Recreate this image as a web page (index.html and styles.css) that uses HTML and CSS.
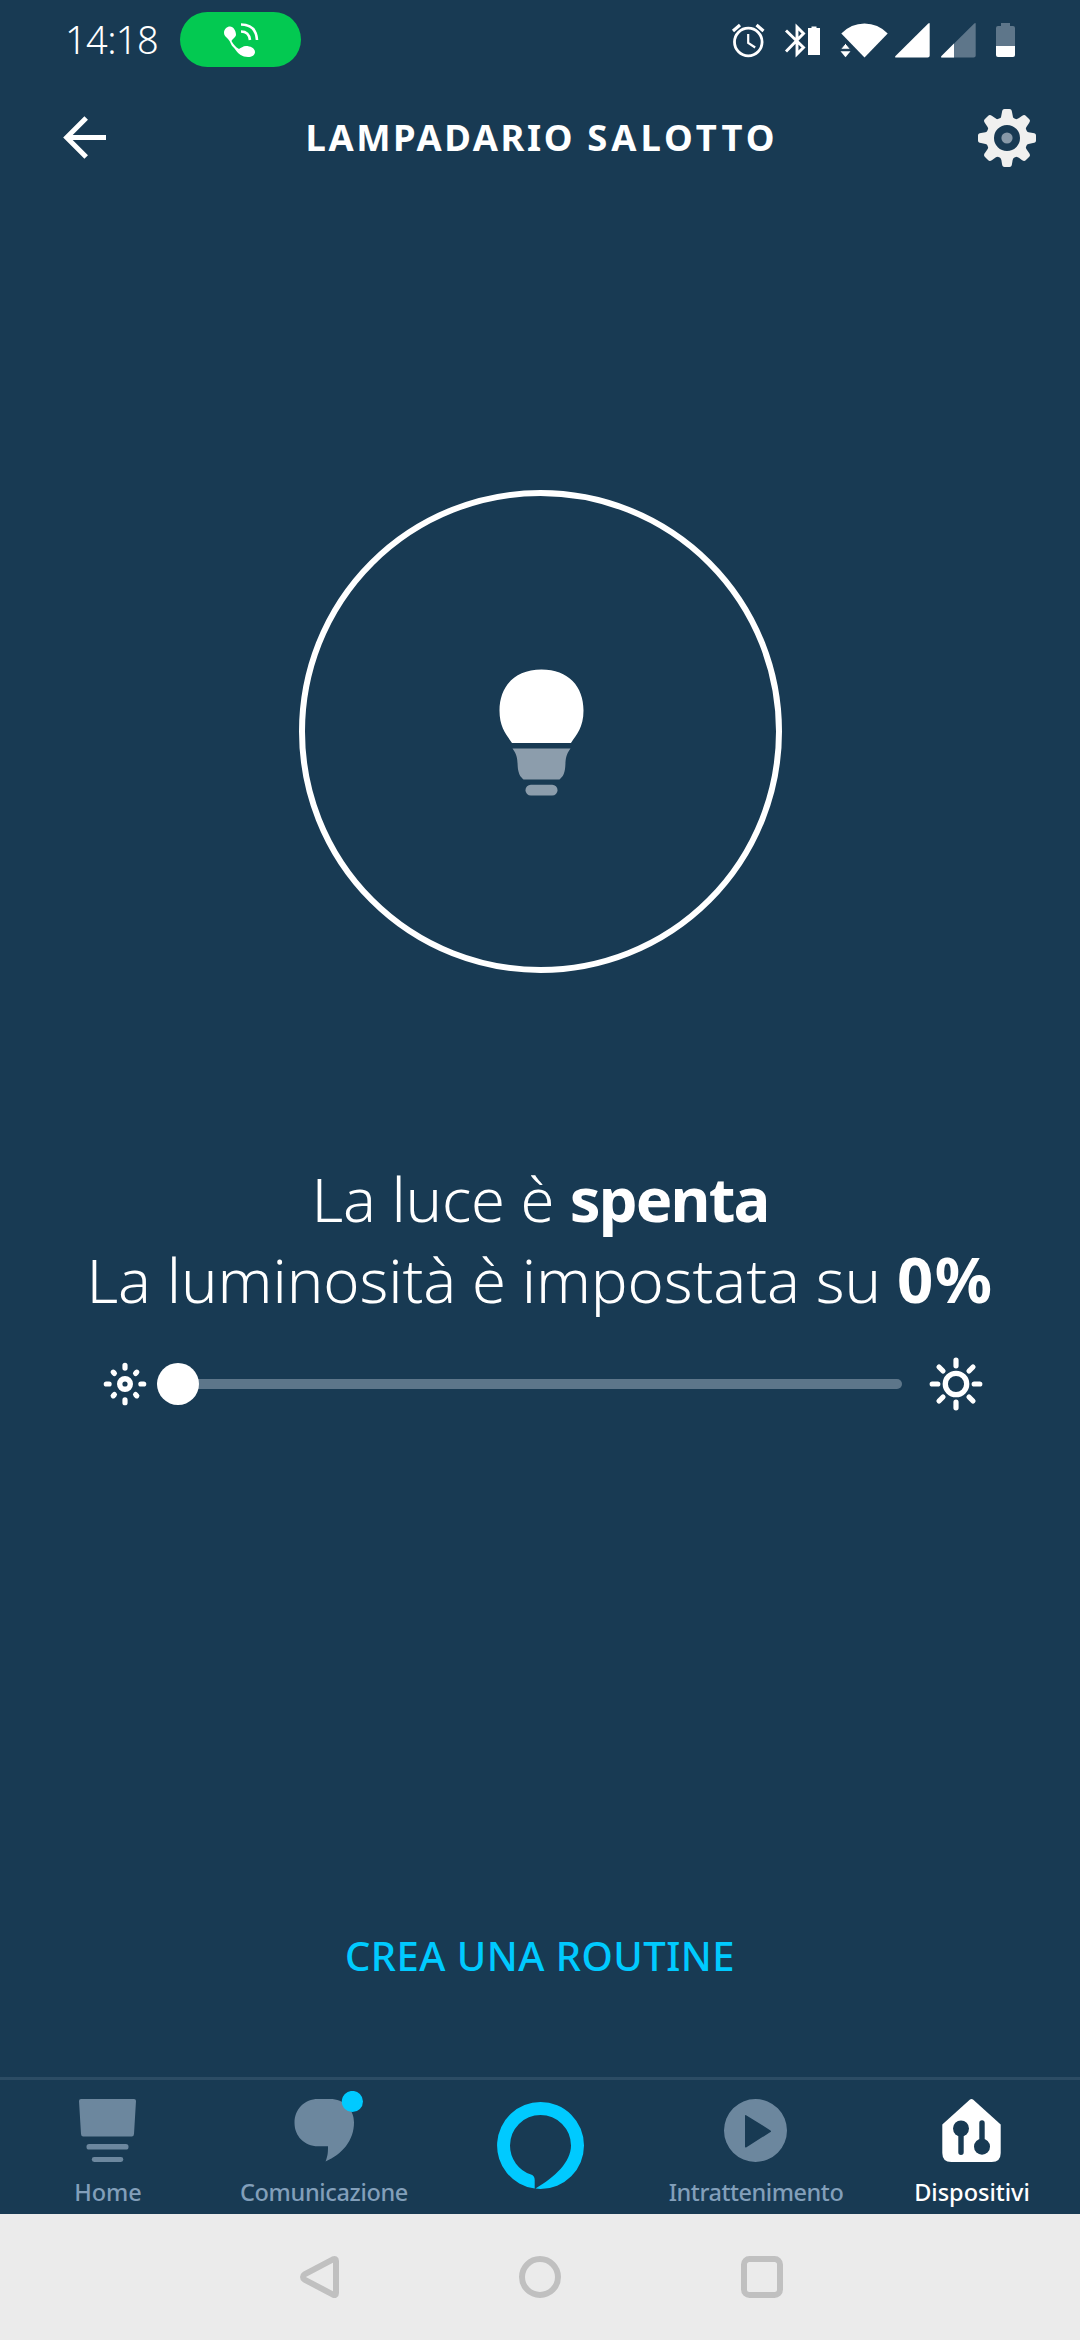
FILE: index.html
```html
<!DOCTYPE html>
<html lang="it">
<head>
<meta charset="utf-8">
<title>Lampadario salotto</title>
<link rel="stylesheet" href="styles.css">
</head>
<body>
<div class="screen">
  <div class="status-bar">
    <span class="clock">14:18</span>
    <span class="call-pill">
      <svg width="38" height="38" viewBox="221 20 38 38">
        <path d="M223 32c0-4 3-6.500 6-6.500 3.500 0 6 4.500 6 8 0 3-3 3.500-4.500 6.500 2 3.500 4 6 7.500 8 2-1 4-3 7-3 4 0 9 2 9 6 0 3-3 5-7 5-6 0-9.500-3-12-6.500-2-3-4-4-5-6.500-1-2.500-1.500-3-3-5-2-2-4-3.500-4-6z" fill="#fff"/>
        <path d="M240 30.500q8 0 9 8.500M240 23.500q15 0 16 15.500" fill="none" stroke="#fff" stroke-width="2.600"/>
      </svg>
    </span>
    <span class="status-icons">
      <svg class="i-alarm" width="36" height="36" viewBox="731 22 36 36" fill="none" stroke="#fff">
        <circle cx="748.300" cy="42" r="13.800" stroke-width="2.800"/>
        <path d="M748.200 34v9l7 4.500" stroke-width="2.200"/>
        <path d="M733 31l7-6M763.500 31l-7-6" stroke-width="3.200"/>
      </svg>
      <svg class="i-bt" width="38" height="36" viewBox="784 22 38 36">
        <path d="M786 30.500l17.500 17L797 54V27l6.500 6.500-17.500 18" fill="none" stroke="#fff" stroke-width="2.900"/>
        <path d="M808 55V28h3.500v-1.500h5V28h3.500v27z" fill="#fff"/>
      </svg>
      <svg class="i-wifi" width="48" height="36" viewBox="840 22 48 36" fill="#fff">
        <path d="M841.300 33.500Q851 23.500 864.500 23.500T887.700 33.500L864.500 57.500z"/>
        <path d="M840.500 49.300h10l-5-6z" stroke="#183a53" stroke-width="1"/><path d="M840.500 51.300h10l-5 6z"/>
      </svg>
      <svg class="i-sig" width="35" height="36" viewBox="895 22 35 36">
        <path d="M929.700 24v31.500q0 2-2 2H896q-1.500 0-.5-1.500L928 23.700q1.700-1.500 1.700.3z" fill="#fff"/>
      </svg>
      <svg class="i-sig2" width="35" height="36" viewBox="941 22 35 36">
        <path d="M975.700 24v31.500q0 2-2 2H942q-1.500 0-.5-1.500L974 23.700q1.700-1.500 1.700.3z" fill="#5e768a"/>
        <path d="M954 43.600v13.900h-12q-1.500 0-.5-1.500z" fill="#fff"/>
      </svg>
      <svg class="i-bat" width="20" height="36" viewBox="996 22 20 36">
        <path d="M996 46V28q0-2 2-2h3v-3h9v3h3q2 0 2 2v18z" fill="#5e768a"/>
        <path d="M996 46h19v9q0 2-2 2h-15q-2 0-2-2z" fill="#fff"/>
      </svg>
    </span>
  </div>

  <header class="header">
    <svg class="back" width="44" height="44" viewBox="63 116 44 44" fill="none" stroke="#fff" stroke-width="5">
      <path d="M106 137.500H67M86.200 118L66.700 137.500 86.200 157"/>
    </svg>
    <h1 class="title"><span class="word-device">LAMPADARIO</span> <span class="word-room">SALOTTO</span></h1>
    <svg class="gear" width="60" height="60" viewBox="-30 -30 60 60">
      <g fill="#f0f0ef">
        <circle r="17" fill="none" stroke="#f0f0ef" stroke-width="8"/>
        <path id="tooth" d="M-7.500-18Q-5.500-21-5-26-4.700-29-2.500-29h5Q4.700-29 5-26q.5 5 2.500 8z"/>
        <use href="#tooth" transform="rotate(45)"/><use href="#tooth" transform="rotate(90)"/>
        <use href="#tooth" transform="rotate(135)"/><use href="#tooth" transform="rotate(180)"/>
        <use href="#tooth" transform="rotate(225)"/><use href="#tooth" transform="rotate(270)"/>
        <use href="#tooth" transform="rotate(315)"/>
      </g>
      <circle r="5.600" fill="#8799a8"/>
    </svg>
  </header>

  <main class="main">
    <div class="light-toggle">
      <svg width="86" height="128" viewBox="497.500 667.500 86 128">
        <path d="M511.500 742.500C506 734 499 727 499 710c0-24 15-41 42-41s42 17 42 41c0 17-7 24-12.500 32.500z" fill="#fff"/>
        <path d="M512 748h58c-7 9-4 16-6 23-1 4-2 5-5 8h-36c-3-3-4-4-5-8-2-7 1-14-6-23z" fill="#8c9dac"/>
        <rect x="525" y="784.300" width="32" height="10.700" rx="5.300" fill="#8c9dac"/>
      </svg>
    </div>
    <p class="state state-power">La luce è <b>spenta</b></p>
    <p class="state state-level">La luminosità è impostata su <b>0%</b></p>
    <div class="dimmer">
      <svg width="44" height="44" viewBox="-22 -22 44 44" stroke="#fff" stroke-linecap="round" fill="none">
        <circle r="5.300" stroke-width="5.400"/>
        <path stroke-width="5.200" d="M0-18.700v2.800M0 18.700v-2.800M-18.700 0h2.800M18.700 0h-2.800M-11.800-11.800l1.200 1.200M11.800-11.800l-1.200 1.200M-11.800 11.800l1.200-1.200M11.800 11.800l-1.200-1.200"/>
      </svg>
      <div class="track"><div class="thumb"></div></div>
      <svg width="54" height="54" viewBox="-27 -27 54 54" stroke="#fff" stroke-linecap="round" fill="none">
        <circle r="10.700" stroke-width="5.300"/>
        <path stroke-width="5.200" d="M0-23.800v5.600M0 23.800v-5.600M-23.800 0h5.600M23.800 0h-5.600M-17-17l4 4M17-17l-4 4M-17 17l4-4M17 17l-4-4"/>
      </svg>
    </div>
    <a class="routine">CREA UNA ROUTINE</a>
  </main>

  <nav class="tabs">
    <div class="tab">
      <svg width="64" height="64" viewBox="76 2099 64 64" fill="#6c879e">
        <path d="M81 2099h53q2 0 2 2l-2 33q-.2 2.500-2.200 2.500h-48.600q-2 0-2.200-2.500l-2-33q0-2 2-2z"/>
        <rect x="86.500" y="2144" width="42" height="5.600" rx="2.600"/><rect x="91.800" y="2157" width="31.500" height="5" rx="2.400"/>
      </svg>
      <span class="label">Home</span>
    </div>
    <div class="tab tab-comm">
      <svg width="80" height="72" viewBox="284 2091 80 72">
        <path d="M318 2099h12c14 0 24 10 24 23.500 0 18-12 32-28.500 39 2.500-6 2.500-10 2.500-15.300h-10c-13.500 0-23.500-10-23.500-23.500S304.500 2099 318 2099z" fill="#6c879e"/>
        <circle cx="352.400" cy="2101.500" r="10.600" fill="#00caff"/>
      </svg>
      <span class="label">Comunicazione</span>
    </div>
    <div class="tab tab-alexa">
      <svg width="88" height="88" viewBox="496 2101 88 88">
        <path d="M534.700 2188.600A43.500 43.500 0 0 1 540.500 2102A43.500 43.500 0 0 1 540.500 2189L535.500 2188.500C555 2177 571 2162 571 2145.500A30.500 30.500 0 0 0 510 2145.500A30.500 30.500 0 0 0 531 2174.500Q534.700 2175.500 534.700 2180z" fill="#00caff"/>
      </svg>
    </div>
    <div class="tab tab-media">
      <svg width="64" height="64" viewBox="724 2099 64 64">
        <path fill-rule="evenodd" d="M755.500 2099a31.500 31.500 0 1 1 0 63 31.500 31.500 0 0 1 0-63zM745 2116v30.500q0 1.500 1.500.7l24-15.200q1.300-.8 0-1.600l-24-15q-1.500-.8-1.500.6z" fill="#6c879e"/>
      </svg>
      <span class="label">Intrattenimento</span>
    </div>
    <div class="tab tab-active">
      <svg width="64" height="64" viewBox="940 2099 64 64">
        <path d="M970 2099.600q1.500-1.200 3 0l27.700 25V2153q0 9-9 9h-40.400q-9 0-9-9v-28.400z" fill="#fff"/>
        <g fill="#183a53" stroke="#183a53" stroke-linecap="round" stroke-width="5.400">
          <circle cx="961" cy="2128.500" r="8" stroke="none"/><path d="M961 2128v24.300M982 2123v24"/>
          <circle cx="982" cy="2146.700" r="8" stroke="none"/>
        </g>
      </svg>
      <span class="label">Dispositivi</span>
    </div>
  </nav>

  <div class="system-nav">
    <svg width="48" height="48" viewBox="294 2253 48 48" fill="none" stroke="#c0c0c0" stroke-width="6" stroke-linejoin="round">
      <path d="M303 2277q0-1.600 1.500-2.600l28.500-15q3-1.200 3 1.600v32q0 2.800-3 1.600l-28.500-15q-1.500-1-1.500-2.600z"/>
    </svg>
    <svg width="48" height="48" viewBox="516 2253 48 48" fill="none" stroke="#c0c0c0" stroke-width="6">
      <circle cx="540" cy="2277" r="18"/>
    </svg>
    <svg width="48" height="48" viewBox="738 2253 48 48" fill="none" stroke="#c0c0c0" stroke-width="6">
      <rect x="744" y="2259" width="36" height="36" rx="5.500"/>
    </svg>
  </div>
</div>
</body>
</html>
```
FILE: styles.css
```css
* { box-sizing: border-box; margin: 0; padding: 0; }

body {
  background: #183a53;
  color: #fff;
  font-family: "Noto Sans", "Open Sans", sans-serif;
}

svg { display: block; flex: none; }

.screen {
  width: 1080px;
  height: 2340px;
  display: flex;
  flex-direction: column;
  overflow: hidden;
}

.status-bar {
  height: 80px;
  display: flex;
  align-items: center;
  padding: 0 64px 1px 65px;
  flex: none;
}
.clock {
  width: 115px;
  font-size: 38px;
  font-weight: 300;
  letter-spacing: -0.600px;
  line-height: 77px;
  padding-bottom: 1px;
  white-space: nowrap;
}
.call-pill {
  width: 121px;
  height: 55px;
  border-radius: 28px;
  background: #03c951;
  display: flex;
  align-items: center;
  justify-content: center;
}
.status-icons { margin: 1px 0 0 auto; display: flex; }
.i-bt { margin-left: 17px; }
.i-wifi { margin-left: 18px; }
.i-sig { margin-left: 7px; }
.i-sig2 { margin-left: 11px; }
.i-bat { margin-left: 20px; }

.header {
  height: 115px;
  flex: none;
  display: flex;
  align-items: center;
  justify-content: space-between;
  padding: 0 43px 0 63px;
}
.title {
  display: flex;
  gap: 12px;
  font-size: 36.400px;
  font-weight: 700;
  line-height: 50px;
  padding-bottom: 2px;
  white-space: nowrap;
}
.word-device { letter-spacing: 2.600px; }
.word-room { letter-spacing: 4px; }

.main {
  flex: 1;
  display: flex;
  flex-direction: column;
  align-items: center;
}
.light-toggle {
  width: 483px;
  height: 483px;
  margin: 295px 0 0 1px;
  border: 6px solid #fff;
  border-radius: 50%;
  display: flex;
  align-items: center;
  justify-content: center;
}
.state {
  height: 81px;
  font-size: 61.500px;
  font-weight: 300;
  line-height: 81px;
  white-space: nowrap;
}
.state b { font-weight: 700; }
.state-power {
  margin-top: 185px;
  letter-spacing: -0.250px;
}
.state-power b { letter-spacing: -1.900px; }
.state-level { letter-spacing: -0.100px; }
.state-level b {
  font-size: 63.500px;
  line-height: 1;
  letter-spacing: 1.500px;
}

.dimmer {
  width: 1080px;
  height: 54px;
  margin-top: 37px;
  padding: 0 97px 0 103px;
  display: flex;
  align-items: center;
}
.track {
  flex: 1;
  height: 10px;
  margin: 0 27px 0 10px;
  border-radius: 5px;
  background: #5d768a;
  display: flex;
  align-items: center;
}
.thumb { width: 42px; height: 42px; border-radius: 50%; background: #fff; }

.routine {
  margin-top: auto;
  margin-bottom: 93px;
  font-size: 40px;
  font-weight: 500;
  letter-spacing: 0.450px;
  line-height: 56px;
  color: #00caff;
  white-space: nowrap;
}

.tabs {
  height: 137px;
  flex: none;
  border-top: 3px solid #2c4c64;
  display: grid;
  grid-template-columns: repeat(5, 1fr);
}
.tab {
  display: flex;
  flex-direction: column;
  align-items: center;
  justify-content: flex-end;
}
.tab svg { margin-bottom: 10px; }
.tab-alexa svg { margin-bottom: 25px; }
.label {
  font-size: 23.500px;
  font-weight: 500;
  line-height: 38px;
  height: 41px;
  color: #829fba;
  white-space: nowrap;
}
.tab-comm .label { letter-spacing: -0.350px; }
.tab-media .label { letter-spacing: -0.450px; }
.tab-active .label { color: #fff; }

.system-nav {
  height: 126px;
  flex: none;
  background: #ebebeb;
  display: flex;
  align-items: center;
  justify-content: center;
  gap: 174px;
}
```
